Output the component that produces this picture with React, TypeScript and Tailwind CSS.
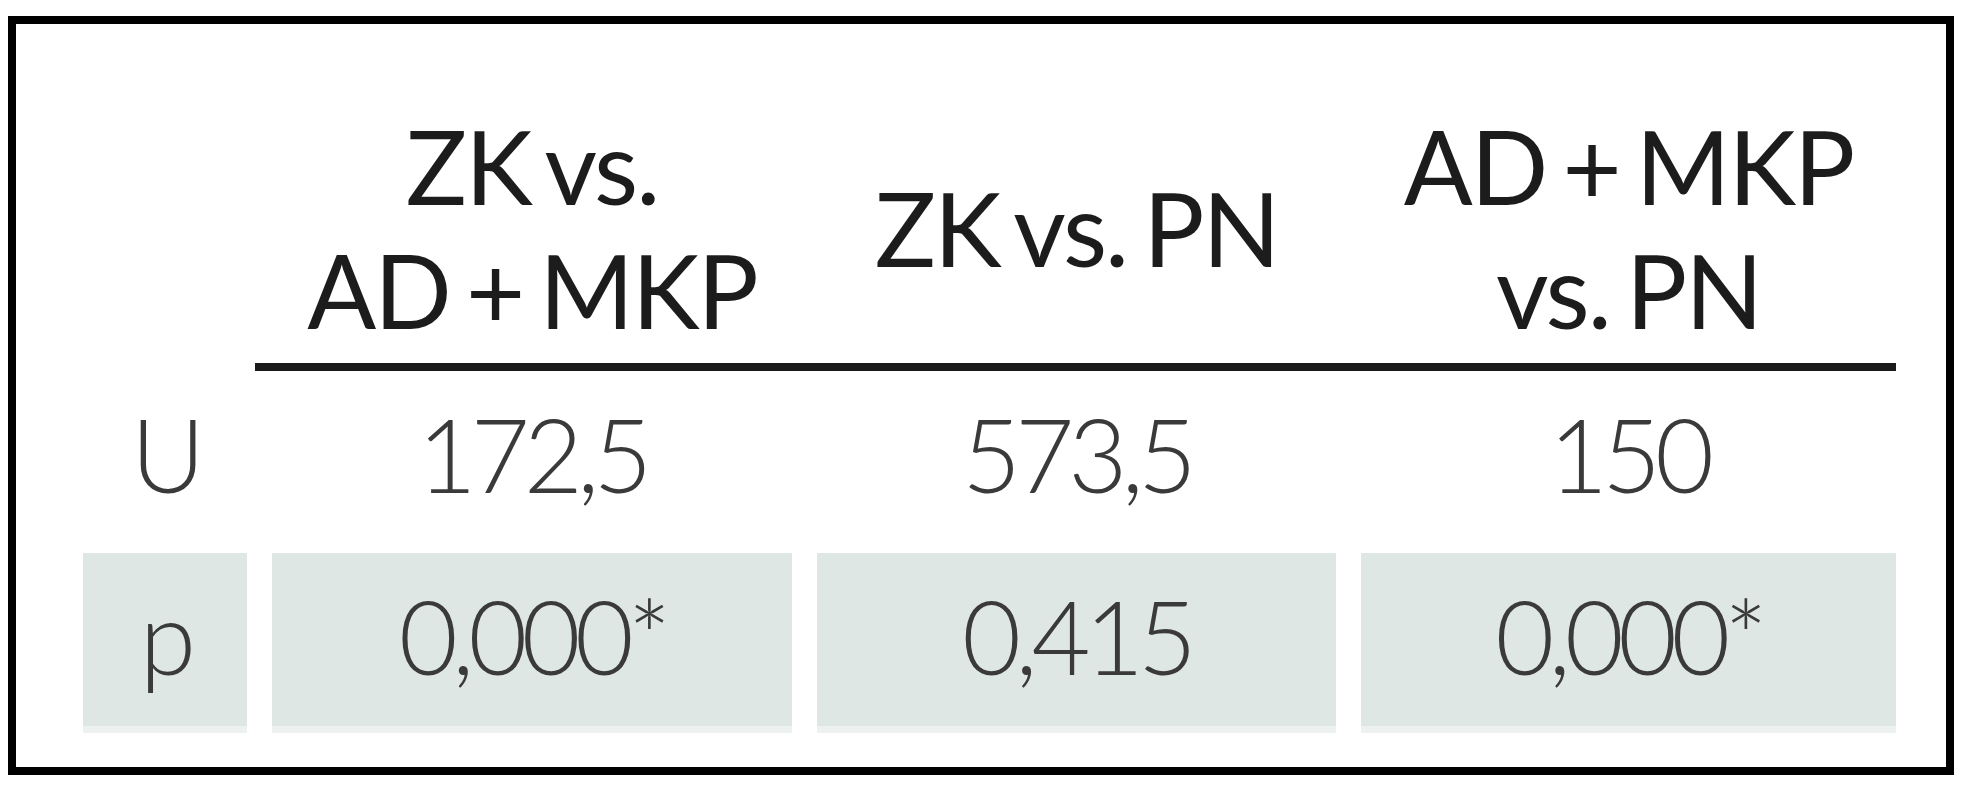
import React from "react";

const font = { fontFamily: "Lato, 'Open Sans', sans-serif" };

function Head({ lines }: { lines: string[] }) {
  return (
    <div className="h-[248px] flex flex-col items-center justify-center text-[102px] leading-[124px] text-[#1c1c1c] tracking-[-2px] [word-spacing:-8px] whitespace-nowrap">
      {lines.map((l) => (
        <div key={l}>{l}</div>
      ))}
    </div>
  );
}

function Val({ v, shaded }: { v: string; shaded?: boolean }) {
  return (
    <div
      className={
        "flex justify-center pt-[21px] text-[102px] leading-[124px] font-light text-[#3a3a3a] tracking-[-6px] whitespace-nowrap " +
        (shaded ? "h-[180px] bg-[#dfe7e5] border-b-[7px] border-[#edf2f1]" : "h-[182px]")
      }
    >
      {v}
    </div>
  );
}

export default function App() {
  return (
    <div className="w-[1971px] h-[800px] bg-white pt-[16px] pl-[8px]" style={font}>
      <div className="w-[1946px] h-[759px] border-[8px] border-black bg-white">
        <div className="grid grid-cols-[164px_520px_519px_535px] gap-x-[25px] pl-[67px] pt-[80px]">
          <div />
          <Head lines={["ZK vs.", "AD + MKP"]} />
          <Head lines={["ZK vs. PN"]} />
          <Head lines={["AD + MKP", "vs. PN"]} />
        </div>
        <div className="mt-[11px] ml-[239px] w-[1641px] h-[8px] bg-[#1a1a1a]" />
        <div className="grid grid-cols-[164px_520px_519px_535px] gap-x-[25px] pl-[67px]">
          <Val v="U" />
          <Val v="172,5" />
          <Val v="573,5" />
          <Val v="150" />
          <Val v="p" shaded />
          <Val v="0,000*" shaded />
          <Val v="0,415" shaded />
          <Val v="0,000*" shaded />
        </div>
      </div>
    </div>
  );
}
